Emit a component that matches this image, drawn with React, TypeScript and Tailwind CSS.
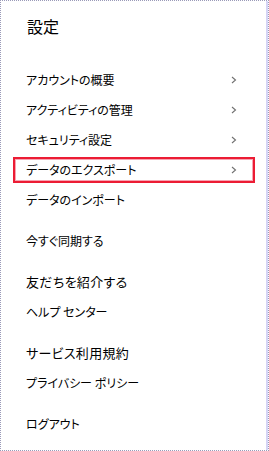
import React from "react";

type Item = { label: string; chevron?: boolean; active?: boolean; size?: string };

const groups: Item[][] = [
  [
    { label: "アカウントの概要", chevron: true },
    { label: "アクティビティの管理", chevron: true },
    { label: "セキュリティ設定", chevron: true },
    { label: "データのエクスポート", chevron: true, active: true },
    { label: "データのインポート" },
  ],
  [{ label: "今すぐ同期する" }],
  [{ label: "友だちを紹介する", size: "big" }, { label: "ヘルプ センター" }],
  [{ label: "サービス利用規約", size: "big" }, { label: "プライバシー ポリシー" }],
  [{ label: "ログアウト" }],
];

function Chevron() {
  return (
    <svg width="6" height="8" viewBox="0 0 6 8" className="shrink-0">
      <polyline points="1,1 4.5,4 1,7" fill="none" stroke="#707070" strokeWidth="1.1" />
    </svg>
  );
}

export default function App() {
  return (
    <div
      className="box-border w-[269px] h-[451px] bg-white border border-dotted border-[#9a9ab8] shadow-[inset_-2px_0_0_#d4d4f6] text-black flex flex-col pl-[12px] pr-[13px]"
      style={{ fontFamily: '"Noto Sans CJK JP", "Noto Sans", sans-serif', fontFeatureSettings: '"palt"' }}
    >
      <div className="mt-[15px] h-[20px] flex items-center pl-[14px] text-[16px] leading-[20px]">設定</div>
      <div className="mt-[29px] flex flex-col gap-[11px]">
        {groups.map((g, gi) => (
          <div key={gi} className="flex flex-col">
            {g.map((it) => (
              <div key={it.label} className="h-[30px] py-[2px] box-border">
                <div
                  className={
                    "h-[26px] box-border border-2 flex items-center justify-between pl-[11px] pr-[16px] " +
                    (it.active
                      ? "border-[#ec1c34] shadow-[inset_0_0_0_1px_#f7a4b2]"
                      : "border-transparent")
                  }
                >
                  <span
                    className={
                      (it.size === "big" ? "text-[13px] tracking-[0.3px]" : "text-[12px]") +
                      " leading-[16px] whitespace-nowrap"
                    }
                  >
                    {it.label}
                  </span>
                  {it.chevron ? <Chevron /> : null}
                </div>
              </div>
            ))}
          </div>
        ))}
      </div>
    </div>
  );
}
